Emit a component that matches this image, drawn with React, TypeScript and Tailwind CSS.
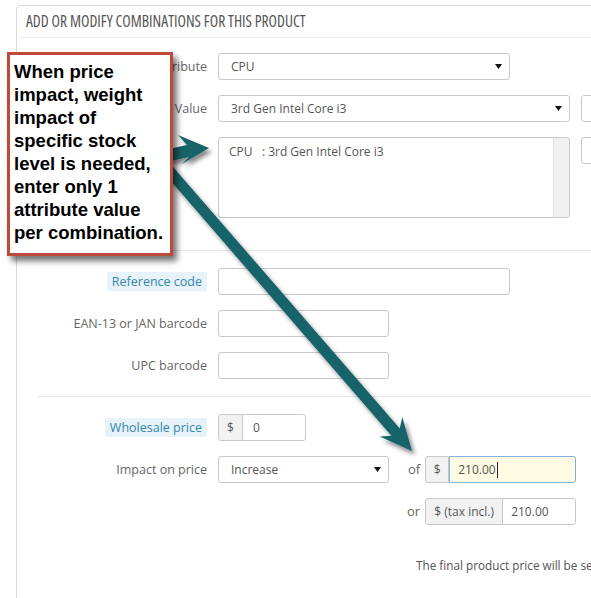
import React from "react";

const labelCls = "w-[190px] shrink-0 text-right text-[12.5px] leading-[17px] text-[#666]";

function Caret() {
  return (
    <svg width="7" height="5" viewBox="0 0 7 5" className="shrink-0">
      <polygon points="0,0 7,0 3.5,5" fill="#111" />
    </svg>
  );
}

function Select({ w, text }: { w: string; text: string }) {
  return (
    <div className={`${w} h-[27px] flex items-center justify-between pl-[12px] pr-[7px] border border-[#c8c8c8] rounded-[3px] bg-white text-[12px] text-[#555]`}>
      <span>{text}</span>
      <Caret />
    </div>
  );
}

function HelpLabel({ children }: { children: React.ReactNode }) {
  return (
    <span className="inline-block bg-[#e7f3f9] text-[#3586ae] px-[5px] py-[1px] rounded-[2px]">{children}</span>
  );
}

export default function App() {
  return (
    <div className="relative w-[591px] h-[598px] overflow-hidden bg-white" style={{ fontFamily: '"Open Sans", "Liberation Sans", sans-serif' }}>
      {/* Panel */}
      <div className="ml-[16px] mt-[5px] w-[720px] h-[700px] border border-[#d6dadd] rounded-[5px] bg-white">
        <div className="mx-[3px] h-[32px] border-b border-[#ececec] flex items-center pl-[6px]">
          <span className="text-[15.5px] text-[#555] uppercase [font-stretch:75%]">
            Add or modify combinations for this product
          </span>
        </div>

        {/* Attribute */}
        <div className="flex items-center mt-[15px]">
          <div className={labelCls}>Attribute</div>
          <div className="ml-[11px]">
            <Select w="w-[292px]" text="CPU" />
          </div>
        </div>

        {/* Value */}
        <div className="flex items-center mt-[15px]">
          <div className={labelCls}>Value</div>
          <div className="ml-[11px] flex items-center">
            <Select w="w-[352px]" text="3rd Gen Intel Core i3" />
            <div className="ml-[11px] w-[60px] h-[27px] border border-[#c8c8c8] rounded-[3px] bg-white" />
          </div>
        </div>

        {/* Textarea */}
        <div className="flex items-start mt-[15px]">
          <div className={labelCls}></div>
          <div className="ml-[11px] flex items-start">
            <div className="w-[352px] h-[81px] flex border border-[#c8c8c8] rounded-[3px] bg-white">
              <div className="flex-1 pl-[10px] pt-[5px] text-[12px] leading-[17px] text-[#555] whitespace-pre">CPU   : 3rd Gen Intel Core i3</div>
              <div className="w-[16px] bg-[#f1f1f1] border-l border-[#e2e2e2] rounded-r-[3px]" />
            </div>
            <div className="ml-[11px] w-[60px] h-[27px] border border-[#c8c8c8] rounded-[3px] bg-white" />
          </div>
        </div>

        <div className="ml-[20px] mt-[32px] h-px bg-[#e8e8e8]" />

        {/* Reference */}
        <div className="flex items-center mt-[17px]">
          <div className={labelCls}><HelpLabel>Reference code</HelpLabel></div>
          <div className="ml-[11px] w-[292px] h-[27px] border border-[#c8c8c8] rounded-[3px] bg-white" />
        </div>

        {/* EAN */}
        <div className="flex items-center mt-[15px]">
          <div className={labelCls}>EAN-13 or JAN barcode</div>
          <div className="ml-[11px] w-[171px] h-[27px] border border-[#c8c8c8] rounded-[3px] bg-white" />
        </div>

        {/* UPC */}
        <div className="flex items-center mt-[15px]">
          <div className={labelCls}>UPC barcode</div>
          <div className="ml-[11px] w-[171px] h-[27px] border border-[#c8c8c8] rounded-[3px] bg-white" />
        </div>

        <div className="ml-[20px] mt-[17px] h-px bg-[#e8e8e8]" />

        {/* Wholesale */}
        <div className="flex items-center mt-[17px]">
          <div className={labelCls}><HelpLabel>Wholesale price</HelpLabel></div>
          <div className="ml-[11px] w-[88px] h-[27px] flex border border-[#c8c8c8] rounded-[3px] bg-white text-[12px] text-[#555]">
            <div className="w-[24px] flex items-center justify-center bg-[#f2f2f2] border-r border-[#c8c8c8] rounded-l-[3px]">$</div>
            <div className="flex-1 flex items-center pl-[10px]">0</div>
          </div>
        </div>

        {/* Impact */}
        <div className="flex items-center mt-[15px]">
          <div className={labelCls}>Impact on price</div>
          <div className="ml-[11px] flex items-center">
            <Select w="w-[171px]" text="Increase" />
            <span className="ml-[19px] text-[13px] text-[#666]">of</span>
            <div className="ml-[5px] w-[151px] h-[27px] flex text-[12px] text-[#555]">
              <div className="w-[24px] flex items-center justify-center bg-[#f2f2f2] border border-[#c8c8c8] rounded-l-[3px]">$</div>
              <div className="flex-1 flex items-center pl-[8px] bg-[#fffbe3] border border-[#7fb2dd] rounded-r-[3px]">
                210.00<span className="inline-block w-px h-[16px] bg-[#222] ml-px" />
              </div>
            </div>
          </div>
        </div>

        {/* or */}
        <div className="flex items-center mt-[15px] ml-[390px]">
          <span className="text-[13px] text-[#666]">or</span>
          <div className="ml-[5px] w-[151px] h-[27px] flex border border-[#c8c8c8] rounded-[3px] bg-white text-[12px] text-[#555]">
            <div className="w-[77px] flex items-center justify-center bg-[#f2f2f2] border-r border-[#c8c8c8] rounded-l-[3px]">$ (tax incl.)</div>
            <div className="flex-1 flex items-center pl-[8px]">210.00</div>
          </div>
        </div>

        <div className="mt-[31px] ml-[399px] text-[11.75px] leading-[18px] text-[#555] whitespace-nowrap">
          The final product price will be set to $210.00
        </div>
      </div>

      {/* Arrows */}
      <svg className="absolute left-0 top-0 pointer-events-none" width="591" height="598" viewBox="0 0 591 598">
        <defs>
          <filter id="arrowShadow" x="-20%" y="-20%" width="140%" height="140%">
            <feDropShadow dx="3" dy="4" stdDeviation="2" floodColor="#000" floodOpacity="0.45" />
          </filter>
        </defs>
        <g fill="#17636a" filter="url(#arrowShadow)">
          <polygon points="159,151 187,145 178,135 209,148 182,164 189,157 161,163" />
          <polygon points="160.9,169.6 391.45,435.7 379.7,436.6 412,451 402.3,417 399.75,428.5 169.15,162.4" />
        </g>
      </svg>

      {/* Callout */}
      <div className="absolute left-[7px] top-[52px] w-[166px] h-[204px] bg-white border-[3px] border-[#be4b3a] shadow-[4px_5px_6px_rgba(0,0,0,0.55)] pl-[4px] pt-[5px]">
        <p className="text-[18.5px] leading-[23px] font-bold text-black" style={{ fontFamily: '"Liberation Sans", Arial, sans-serif' }}>
          When price<br />
          impact, weight<br />
          impact of<br />
          specific stock<br />
          level is needed,<br />
          enter only 1<br />
          attribute value<br />
          per combination.
        </p>
      </div>
    </div>
  );
}
